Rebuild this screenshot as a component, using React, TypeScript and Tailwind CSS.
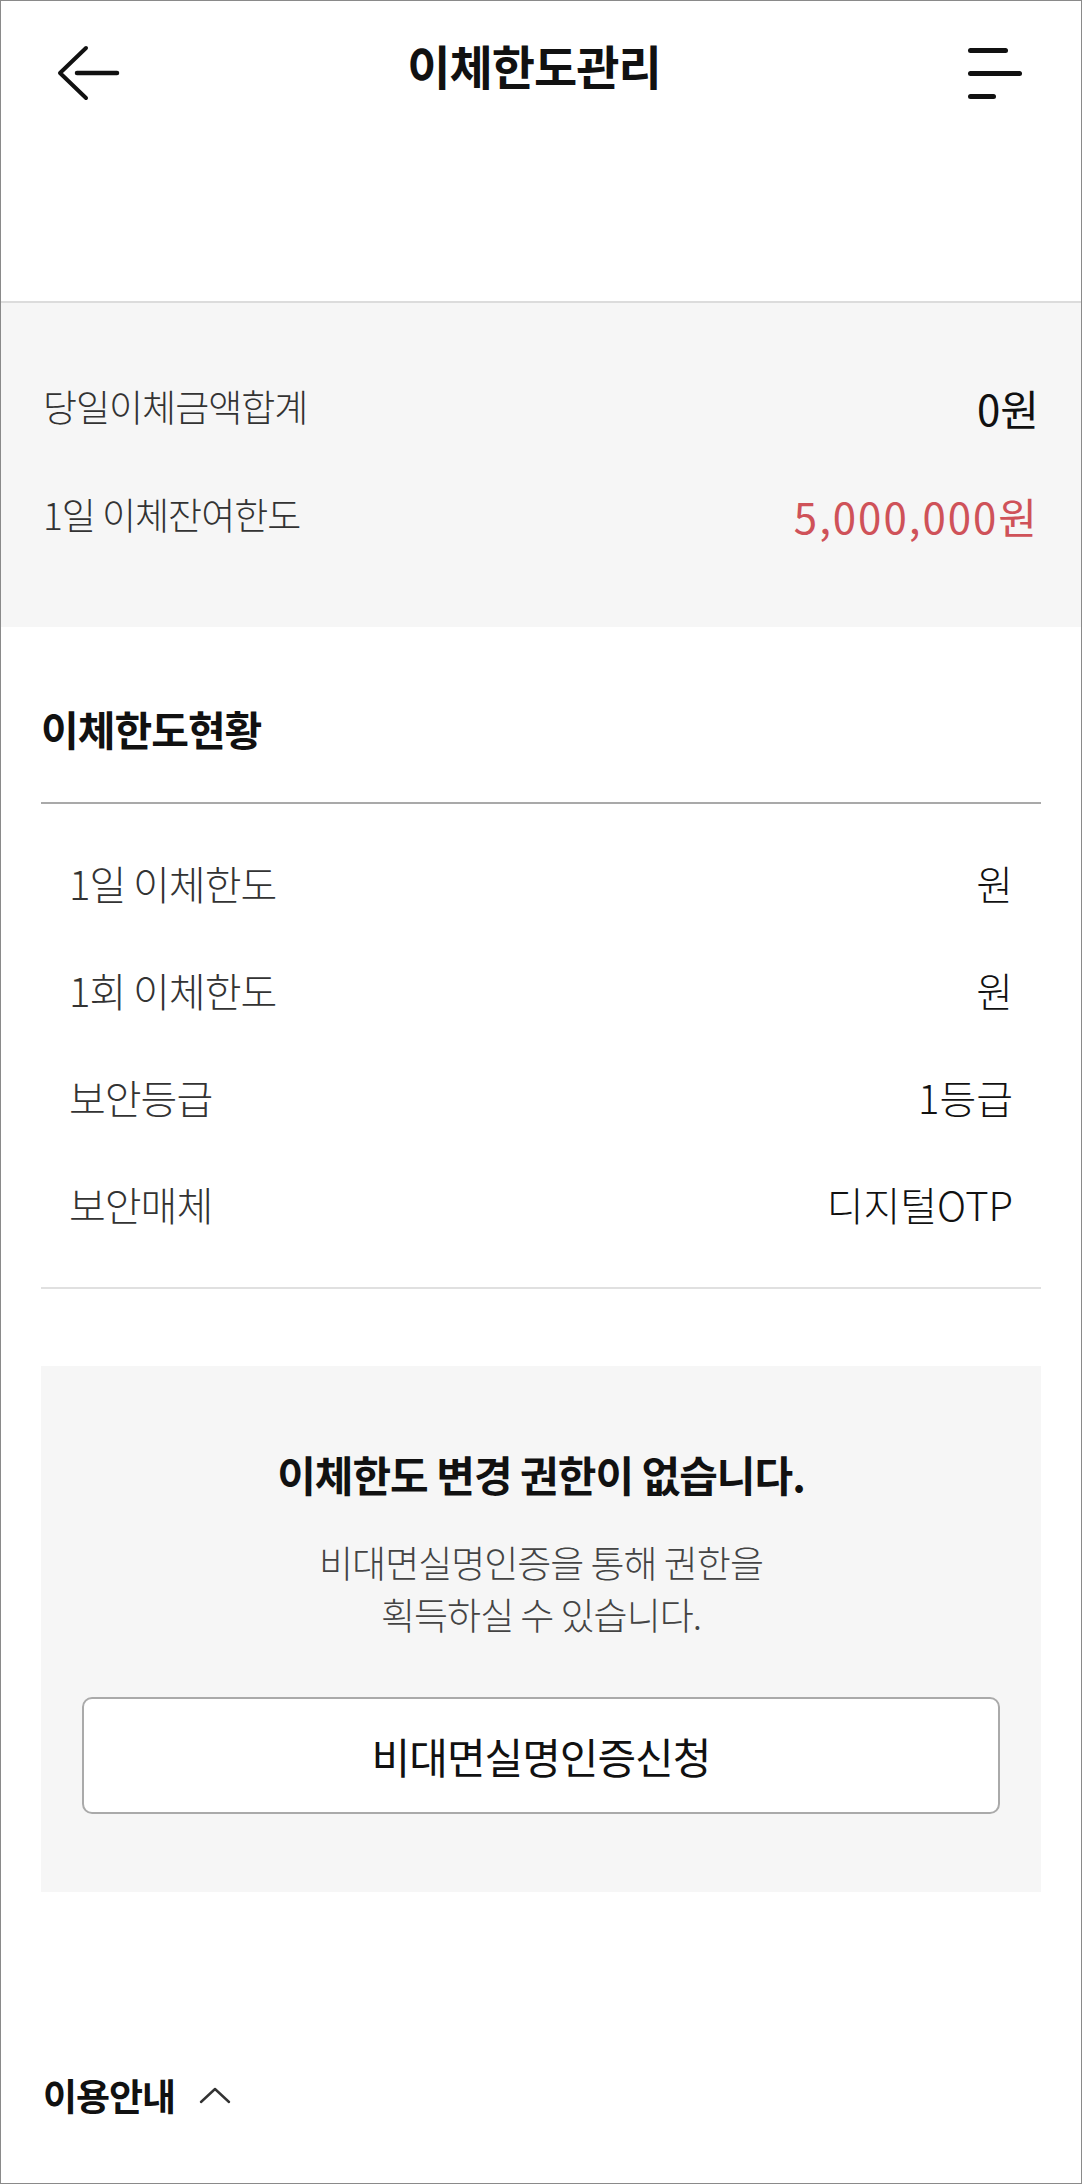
import React from "react";

type Row = { label: string; value: string };

const limitRows: Row[] = [
  { label: "1일 이체한도", value: "원" },
  { label: "1회 이체한도", value: "원" },
  { label: "보안등급", value: "1등급" },
  { label: "보안매체", value: "디지털OTP" },
];

function BackIcon() {
  return (
    <svg width="64" height="56" viewBox="0 0 64 56" fill="none">
      <path
        d="M30 3 L4 28 L30 53"
        stroke="#111"
        strokeWidth="4"
        strokeLinecap="round"
        strokeLinejoin="round"
      />
      <path d="M21 28 H61" stroke="#111" strokeWidth="4.5" strokeLinecap="round" />
    </svg>
  );
}

function MenuIcon() {
  return (
    <div className="flex flex-col gap-[18px] items-start">
      <span className="block h-[5px] w-[40px] rounded-full bg-[#111]" />
      <span className="block h-[5px] w-[54px] rounded-full bg-[#111]" />
      <span className="block h-[5px] w-[28px] rounded-full bg-[#111]" />
    </div>
  );
}

function CaretUp() {
  return (
    <svg width="32" height="18" viewBox="0 0 32 18" fill="none">
      <path
        d="M2 16 L16 3 L30 16"
        stroke="#333"
        strokeWidth="2.4"
        strokeLinecap="round"
        strokeLinejoin="round"
      />
    </svg>
  );
}

export default function App() {
  return (
    <div
      className="w-full h-[2184px] overflow-hidden border border-[#8a8a8a] bg-white text-[#111]"
      style={{ fontFamily: '"Noto Sans CJK KR", "Noto Sans", sans-serif' }}
    >
      {/* top bar */}
      <header className="h-[302px] border-b-2 border-[#dcdcdc]">
        <div className="relative flex h-[144px] items-center justify-between pl-[55px] pr-[59px]">
          <BackIcon />
          <h1 className="absolute left-[calc(50%-7px)] -translate-x-1/2 -translate-y-[8px] text-[47px] font-semibold tracking-[-1px]">
            이체한도관리
          </h1>
          <MenuIcon />
        </div>
      </header>

      {/* today summary */}
      <section className="bg-[#f6f6f6] px-[42px] pt-[50px] pb-[58px]">
        <div className="flex h-[108px] items-center justify-between">
          <span className="text-[37px] font-light tracking-[-1px] text-[#333]">당일이체금액합계</span>
          <span className="text-[42px]">0원</span>
        </div>
        <div className="flex h-[108px] items-center justify-between">
          <span className="text-[37px] font-light tracking-[-1px] text-[#333]">1일 이체잔여한도</span>
          <span className="text-[42px] tracking-[2px] text-[#cf5259]">5,000,000원</span>
        </div>
      </section>

      {/* limit status */}
      <section className="px-[40px]">
        <h2 className="pt-[71px] text-[41px] font-semibold leading-[60px] tracking-[-1px]">
          이체한도현황
        </h2>
        <div className="mt-[44px] h-[2px] bg-[#a9a9a9]" />
        <ul className="px-[28px] pt-[25px] pb-[30px]">
          {limitRows.map((row) => (
            <li key={row.label} className="flex h-[107px] items-center justify-between">
              <span className="text-[40px] font-light tracking-[-1px] text-[#333]">{row.label}</span>
              <span className="text-[40px] font-light text-[#111]">{row.value}</span>
            </li>
          ))}
        </ul>
        <div className="h-[2px] bg-[#e0e0e0]" />

        {/* no permission notice */}
        <div className="mt-[77px] bg-[#f6f6f6] px-[41px] pt-[83px] pb-[78px] text-center">
          <p className="text-[42px] font-semibold leading-[50px] tracking-[-1px]">
            이체한도 변경 권한이 없습니다.
          </p>
          <p className="mt-[37px] text-[37px] font-light leading-[52px] tracking-[-1px] text-[#444]">
            비대면실명인증을 통해 권한을
            <br />
            획득하실 수 있습니다.
          </p>
          <button className="mt-[57px] flex h-[117px] w-full items-center justify-center rounded-[10px] border-2 border-[#aaa] bg-white text-[42px] tracking-[-1px] text-[#111]">
            비대면실명인증신청
          </button>
        </div>
      </section>

      {/* usage guide */}
      <section className="px-[42px] pt-[178px]">
        <div className="flex items-center gap-[24px]">
          <h3 className="text-[37px] font-semibold leading-[50px] tracking-[-1px]">이용안내</h3>
          <CaretUp />
        </div>
        <p className="mt-[57px] pl-[20px] text-[30px] leading-[44px] text-[#333]">
          · 이체한도는 고객님의 보안등급에 따라 적용됩니다.
        </p>
      </section>
    </div>
  );
}
